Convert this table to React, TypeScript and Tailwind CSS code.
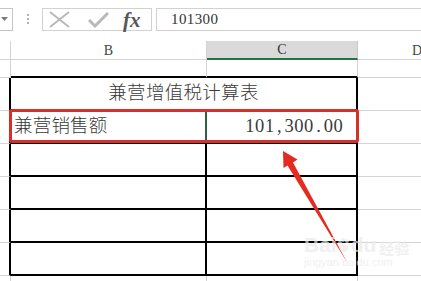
import React from 'react';

const sheetFont = "font-['Liberation_Serif','Noto_Sans_CJK_SC',serif]";

// width of each column, in px: row header, B, C, D
const RH = 'w-[11px] shrink-0';
const COL_B = 'w-[196px] shrink-0';
const COL_C = 'w-[151px] shrink-0';
const COL_D = 'w-[118px] shrink-0';

function FormulaBar() {
  return (
    <div className="flex h-[41px] items-start pt-[8px]">
      {/* name box, scrolled so only the drop arrow shows */}
      <div className="relative h-[23px] w-[13px] shrink-0 border-y border-r border-[#c6c6c6]">
        <svg className="absolute left-[1px] top-[8px]" width="7" height="5" viewBox="0 0 7 5">
          <path d="M0 0 L7 0 L3.5 4 Z" fill="#7a7a7a" />
        </svg>
      </div>
      <div className="flex w-[29px] shrink-0 flex-col items-center gap-[2px] pt-[6px]">
        <span className="h-[2px] w-[2px] bg-[#b3b3b3]" />
        <span className="h-[2px] w-[2px] bg-[#b3b3b3]" />
        <span className="h-[2px] w-[2px] bg-[#b3b3b3]" />
      </div>
      <div className="flex h-[23px] w-[110px] shrink-0 items-center border border-[#d2d2d2] pl-[5px]">
        <svg width="23" height="17" viewBox="0 0 23 17">
          <path d="M2 1 L21 16 M21 1 L2 16" stroke="#b9b9b9" strokeWidth="2" />
        </svg>
        <svg className="ml-[17px]" width="21" height="16" viewBox="0 0 21 16">
          <path d="M1 8 L7 14 L20 1" stroke="#b9b9b9" strokeWidth="3" fill="none" />
        </svg>
        <span className="ml-[14px] font-['Liberation_Serif',serif] text-[21px] leading-[20px] font-bold italic text-[#575757]">
          fx
        </span>
      </div>
      <div className="ml-[4px] flex h-[23px] w-[280px] shrink-0 items-center border border-[#d2d2d2] pl-[14px]">
        <span className="text-[15px] tracking-[0.4px] text-[#333]">101300</span>
      </div>
    </div>
  );
}

function HeaderRow() {
  return (
    <div className="flex h-[19px] text-[14px] leading-[17px] text-[#444]">
      <div className={`${RH} border-r border-b border-[#d4d4d4]`} />
      <div className={`${COL_B} flex items-center justify-center border-r border-b border-[#d4d4d4]`}>B</div>
      <div className={`${COL_C} flex items-center justify-center border-r border-[#c8c8c8] border-b-2 border-b-[#217346] bg-[#dadada] text-[#333]`}>
        C
      </div>
      <div className={`${COL_D} flex items-center justify-center border-b border-[#d4d4d4]`}>D</div>
    </div>
  );
}

function Amount({ value }: { value: string }) {
  return (
    <span className="flex">
      {value.split('').map((ch, i) => (
        <span key={i} className="inline-block w-[9.8px] text-center">
          {ch}
        </span>
      ))}
    </span>
  );
}

function TableRow({ children }: { children?: React.ReactNode }) {
  return (
    <div className="flex h-[33px]">
      <div className={`${RH} border-r-2 border-r-black border-b border-b-[#d4d4d4]`} />
      {children ?? (
        <>
          <div className={`${COL_B} border-r-2 border-b-2 border-black`} />
          <div className={`${COL_C} border-r-2 border-b-2 border-black`} />
        </>
      )}
      <div className={`${COL_D} border-b border-[#d4d4d4]`} />
    </div>
  );
}

export default function App() {
  return (
    <div className={`relative h-[281px] w-[421px] overflow-hidden bg-white text-[#3a3a3a] ${sheetFont}`}>
      <FormulaBar />
      <HeaderRow />

      {/* row above the table, partly scrolled away */}
      <div className="flex h-[18px]">
        <div className={`${RH} border-r border-b border-[#d4d4d4]`} />
        <div className={`${COL_B} border-r border-r-[#d4d4d4] border-b-2 border-b-black`} />
        <div className={`${COL_C} border-r border-r-[#d4d4d4] border-b-2 border-b-black`} />
        <div className={`${COL_D} border-b border-[#d4d4d4]`} />
      </div>

      <TableRow>
        <div className="flex w-[347px] shrink-0 items-center justify-center border-r-2 border-b-2 border-black text-[18.5px] font-light tracking-[0.3px]">
          兼营增值税计算表
        </div>
      </TableRow>
      <TableRow>
        <div className={`${COL_B} flex items-center border-r-2 border-r-[#2f5f45] border-b-2 border-b-black pl-[3px] text-[18.5px] font-light tracking-[0.2px]`}>
          兼营销售额
        </div>
        <div className={`${COL_C} flex items-center justify-end border-r-2 border-b-2 border-black pr-[13px] text-[18.5px]`}>
          <Amount value="101,300.00" />
        </div>
      </TableRow>
      <TableRow />
      <TableRow />
      <TableRow />
      <TableRow />

      <div className="flex h-[6px]">
        <div className={`${RH} border-r border-[#d4d4d4]`} />
        <div className={`${COL_B} border-r border-[#d4d4d4]`} />
        <div className={`${COL_C} border-r border-[#d4d4d4]`} />
      </div>

      {/* red callout round the sales row */}
      <div className="absolute left-[9px] top-[109px] h-[34px] w-[350px] rounded-[3px] border-[3px] border-[#d6302a]" />

      {/* arrow pointing up at the amount */}
      <svg className="absolute left-0 top-0" width="421" height="281" viewBox="0 0 421 281">
        <polygon
          points="283,151 297.5,159.5 293,162.5 347.5,263 287.5,165.5 283.5,168"
          fill="#e52b1f"
        />
      </svg>

      {/* faint watermark */}
      <div className="absolute left-[304px] top-[234px] flex flex-col text-[#ebebeb] opacity-70">
        <div className="flex items-end font-['Liberation_Sans',sans-serif] leading-none">
          <span className="text-[21px] font-bold">Bai</span>
          <svg className="mb-[2px]" width="14" height="16" viewBox="0 0 14 16">
            <circle cx="3" cy="6" r="2" fill="#ebebeb" />
            <circle cx="6" cy="3" r="2" fill="#ebebeb" />
            <circle cx="10" cy="4" r="2" fill="#ebebeb" />
            <ellipse cx="7" cy="11" rx="4.5" ry="4" fill="#ebebeb" />
          </svg>
          <span className="text-[21px] font-bold">du</span>
          <span className="ml-[3px] font-['Noto_Sans_CJK_SC',sans-serif] text-[15px] font-bold">经验</span>
        </div>
        <span className="mt-[2px] font-['Liberation_Sans',sans-serif] text-[11px] leading-none">jingyan.baidu.com</span>
      </div>
    </div>
  );
}
